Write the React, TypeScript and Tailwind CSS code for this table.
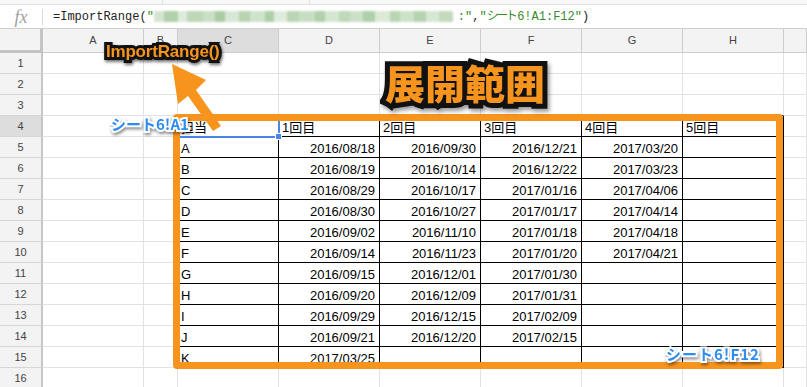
import React from 'react';

const COLS = ['A', 'B', 'C', 'D', 'E', 'F', 'G', 'H', ''];
const TABLE: string[][] = [
  ['担当', '1回目', '2回目', '3回目', '4回目', '5回目'],
  ['A', '2016/08/18', '2016/09/30', '2016/12/21', '2017/03/20', ''],
  ['B', '2016/08/19', '2016/10/14', '2016/12/22', '2017/03/23', ''],
  ['C', '2016/08/29', '2016/10/17', '2017/01/16', '2017/04/06', ''],
  ['D', '2016/08/30', '2016/10/27', '2017/01/17', '2017/04/14', ''],
  ['E', '2016/09/02', '2016/11/10', '2017/01/18', '2017/04/18', ''],
  ['F', '2016/09/14', '2016/11/23', '2017/01/20', '2017/04/21', ''],
  ['G', '2016/09/15', '2016/12/01', '2017/01/30', '', ''],
  ['H', '2016/09/20', '2016/12/09', '2017/01/31', '', ''],
  ['I', '2016/09/29', '2016/12/15', '2017/02/09', '', ''],
  ['J', '2016/09/21', '2016/12/20', '2017/02/15', '', ''],
  ['K', '2017/03/25', '', '', '', ''],
];

const BLUR_BLOCKS = [
  'w-[10px] bg-[#cfe3cb]', 'w-[14px] bg-[#a9cba3]', 'w-[9px] bg-[#d9ead6]', 'w-[16px] bg-[#b6d3b0]',
  'w-[12px] bg-[#c4dcc0]', 'w-[10px] bg-[#a3c69c]', 'w-[14px] bg-[#d3e6d0]', 'w-[11px] bg-[#b0cfaa]',
  'w-[15px] bg-[#c9e0c5]', 'w-[9px] bg-[#a6c8a0]', 'w-[13px] bg-[#dbebd8]', 'w-[12px] bg-[#b3d1ad]',
  'w-[16px] bg-[#c2dbbe]', 'w-[10px] bg-[#a9cba3]', 'w-[14px] bg-[#d0e4cc]', 'w-[11px] bg-[#b8d4b2]',
  'w-[13px] bg-[#c6ddc2]', 'w-[12px] bg-[#a8caa2]', 'w-[15px] bg-[#d6e8d3]', 'w-[10px] bg-[#b1d0ab]',
  'w-[14px] bg-[#c8dfc4]', 'w-[12px] bg-[#afcea9]', 'w-[13px] bg-[#d2e5cf]', 'w-[14px] bg-[#bdd7b7]',
];

function cellBorder(r: number, c: number) {
  const inTable = r >= 4 && r <= 15 && c >= 3 && c <= 8;
  if (inTable) return 'border-r border-b border-black';
  if (r === 3 && c >= 3 && c <= 8) return 'border-r border-b border-r-[#e2e2e2] border-b-black';
  if (c === 2 && r >= 4 && r <= 15) return 'border-r border-b border-r-black border-b-[#e2e2e2]';
  return 'border-r border-b border-[#e2e2e2]';
}

export default function App() {
  const rows = Array.from({ length: 16 }, (_, i) => i + 1);
  return (
    <div className="relative w-[807px] h-[387px] overflow-hidden bg-white font-['Liberation_Sans','Noto_Sans_CJK_JP',sans-serif] text-black">
      {/* top strip */}
      <div className="h-[5px] bg-[#f7f7f7] border-b border-[#e0e0e0] flex">
        <div className="w-[163px] border-r border-[#e0e0e0]" />
        <div className="w-[147px] border-r border-[#e0e0e0]" />
      </div>
      {/* formula bar */}
      <div className="h-[24px] flex items-center border-b border-[#cfcfcf] bg-white">
        <div className="w-[42px] flex items-center justify-center">
          <span className="font-['Liberation_Serif',serif] italic text-[18px] text-[#a0a0a0] leading-none">fx</span>
        </div>
        <div className="w-px h-[16px] bg-[#dadada]" />
        <div className="flex items-center pl-[10px] font-['Liberation_Mono','Noto_Sans_CJK_JP',monospace] text-[12px] leading-none">
          <span className="text-[#222]">=ImportRange(</span>
          <span className="text-[#3a8a2e]">"</span>
          <span className="flex h-[11px] w-[304px] overflow-hidden blur-[1.2px] opacity-90">
            {BLUR_BLOCKS.map((b, i) => (
              <span key={i} className={`h-full shrink-0 ${b}`} />
            ))}
          </span>
          <span className="text-[#3a8a2e]">:"</span>
          <span className="text-[#222]">,</span>
          <span className="text-[#3a8a2e]">"</span>
          <span className="text-[#3a8a2e] tracking-[-2.5px] mr-[2px]">シート</span>
          <span className="text-[#3a8a2e]">6!A1:F12"</span>
          <span className="text-[#222]">)</span>
        </div>
      </div>
      {/* grid */}
      <div className="grid grid-cols-[43px_101px_34px_101px_101px_101px_101px_101px_101px_1fr] grid-rows-[24px_repeat(16,21px)]">
        <div className="bg-[#f3f3f3] border-r-[3px] border-b-[3px] border-[#c4c4c4]" />
        {COLS.map((c, i) => (
          <div
            key={'h' + i}
            className={
              i === 2
                ? 'bg-[#dddddd] border-r border-b border-[#cccccc] flex items-center justify-center text-[11px] text-[#444]'
                : 'bg-[#f3f3f3] border-r border-b border-[#cccccc] flex items-center justify-center text-[11px] text-[#444]'
            }
          >
            {c}
          </div>
        ))}
        {rows.map((r) => (
          <React.Fragment key={'r' + r}>
            <div
              className={
                r === 4
                  ? 'bg-[#dddddd] border-r-2 border-r-[#c6c6c6] border-b border-b-[#d6d6d6] flex items-center justify-center text-[11px] text-[#444]'
                  : 'bg-[#f3f3f3] border-r-2 border-r-[#c6c6c6] border-b border-b-[#d6d6d6] flex items-center justify-center text-[11px] text-[#444]'
              }
            >
              {r}
            </div>
            {COLS.map((_, ci) => {
              const c = ci + 1;
              const inTable = r >= 4 && r <= 15 && c >= 3 && c <= 8;
              const val = inTable ? TABLE[r - 4][c - 3] : '';
              const left = r === 4 || c === 3;
              return (
                <div
                  key={'c' + r + '-' + c}
                  className={`${cellBorder(r, c)} flex items-end pb-[1px] overflow-hidden whitespace-nowrap text-[13px] leading-[15px] ${
                    left ? 'justify-start pl-[3px]' : 'justify-end pr-[4px]'
                  }`}
                >
                  {val}
                </div>
              );
            })}
          </React.Fragment>
        ))}
      </div>

      {/* selection on C4 */}
      <div className="absolute left-[176px] top-[115px] w-[104px] h-[23px] border-2 border-[#4a86e8]" />
      <div className="absolute left-[275px] top-[133px] w-[7px] h-[7px] bg-[#4a86e8] border border-white" />

      {/* orange range rectangle */}
      <div className="absolute left-[173px] top-[114px] w-[610px] h-[255px] border-[7px] border-[#f7941d] rounded-[4px]" />

      {/* arrow */}
      <svg className="absolute left-0 top-0 pointer-events-none" width="807" height="387" viewBox="0 0 807 387">
        <polygon
          points="172,64 206,80 196,90 221,126 213,131 188,96 178,104"
          fill="#f7941d"
        />
      </svg>

      {/* ImportRange() label */}
      <span className="absolute left-[106px] top-[43px] text-[17px] leading-none font-bold tracking-[-0.2px] text-[#f7941d] font-['Liberation_Sans',sans-serif] [-webkit-text-stroke:6px_#111] [paint-order:stroke_fill] drop-shadow-[1px_2px_1.5px_rgba(0,0,0,0.55)]">
        ImportRange()
      </span>

      {/* 展開範囲 */}
      <span className="absolute left-[385px] top-[62px] text-[40px] leading-none font-black text-[#f7941d] font-['Noto_Sans_CJK_JP',sans-serif] [-webkit-text-stroke:10px_#111] [paint-order:stroke_fill] drop-shadow-[2px_3px_2px_rgba(0,0,0,0.4)]">
        展開範囲
      </span>

      {/* シート6!A1 */}
      <span className="absolute left-[111px] top-[116px] text-[15px] leading-none font-bold text-[#2f8cf0] font-['Noto_Sans_CJK_JP',sans-serif] [-webkit-text-stroke:4px_#ffffff] [paint-order:stroke_fill] drop-shadow-[1px_2px_1.5px_rgba(0,0,0,0.45)]">
        シート6!A1
      </span>

      {/* シート6!F12 */}
      <span className="absolute left-[666px] top-[346px] text-[15px] leading-none font-bold tracking-[1px] text-[#2f8cf0] font-['Noto_Sans_CJK_JP',sans-serif] [-webkit-text-stroke:4px_#ffffff] [paint-order:stroke_fill] drop-shadow-[1px_2px_1.5px_rgba(0,0,0,0.45)]">
        シート6!F12
      </span>
    </div>
  );
}
